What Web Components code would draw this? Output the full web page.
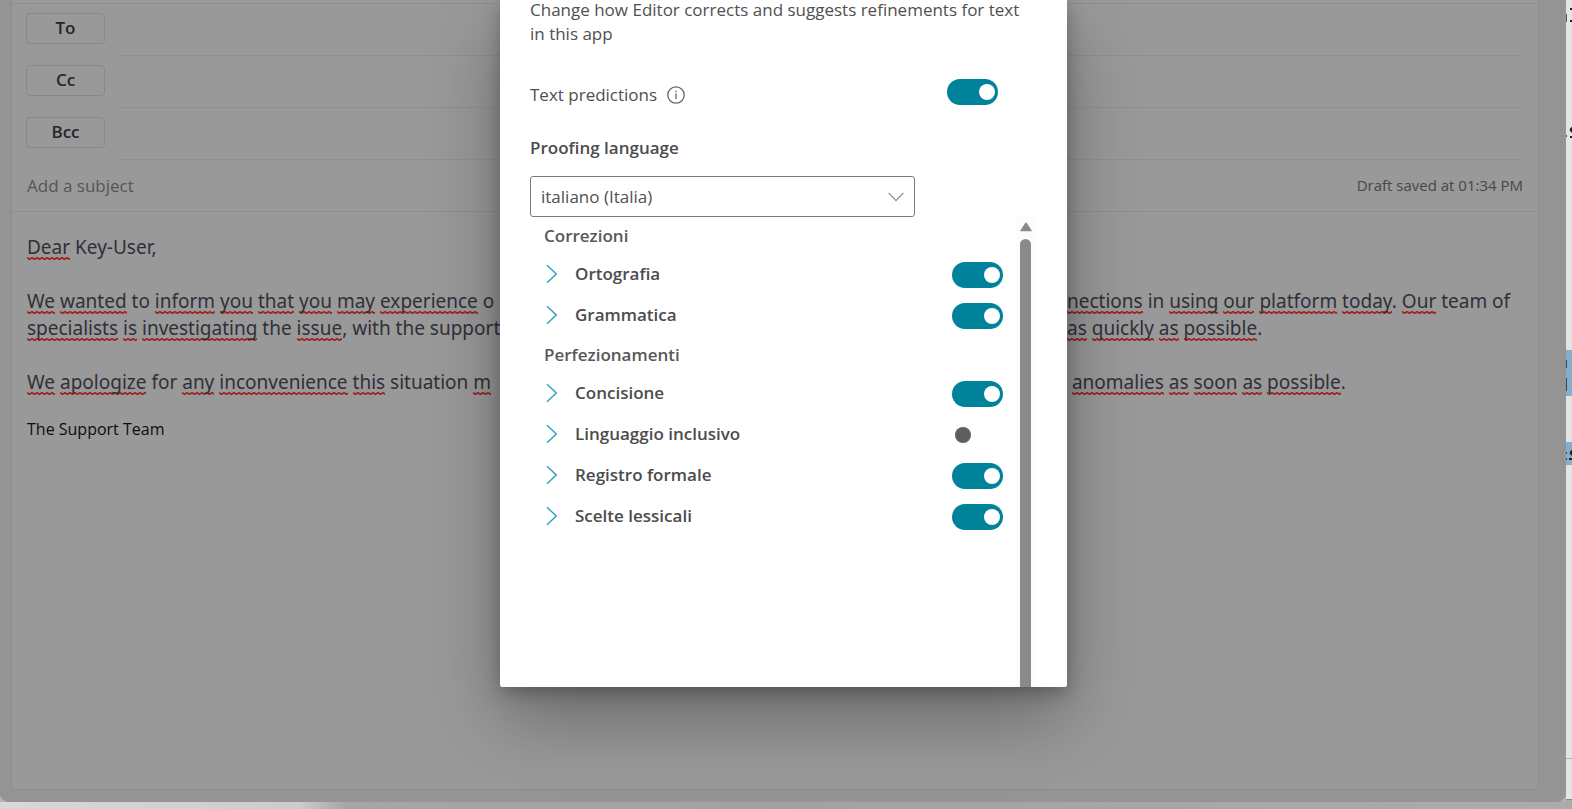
<!DOCTYPE html>
<html lang="en">
<head>
<meta charset="utf-8">
<meta name="viewport" content="width=device-width, initial-scale=1">
<title>Mail – Editor settings</title>
<style>
  body { margin: 0; font-family: "Open Sans", "Noto Sans", sans-serif; background: #e6e6e6; overflow: hidden; }
</style>
</head>
<body>
<mail-app></mail-app>
<script>
const define = (name, html, setup) => {
  const template = document.createElement('template');
  template.innerHTML = html;
  customElements.define(name, class extends HTMLElement {
    constructor() {
      super();
      this.attachShadow({ mode: 'open' }).append(template.content.cloneNode(true));
    }
    connectedCallback() { if (setup) setup(this, this.shadowRoot); }
  });
};

define('recipient-row', `
  <style>
    :host { display: flex; gap: 13px; height: 52px; padding: 0 15px 0 14px; }
    button { box-sizing: border-box; width: 79px; height: 31px; margin-top: 9px; padding: 0 0 2px;
      border: 1px solid #888; border-radius: 4px; background: none; color: #26262c;
      font: 600 17px/20px "Open Sans", sans-serif; }
    input { flex: 1; min-width: 0; border: 0; border-bottom: 1px solid #909090; padding: 0;
      background: none; outline: 0; font: inherit; }
  </style>
  <button type="button"><slot></slot></button>
  <input type="text">`,
  (el, root) => root.querySelector('input').setAttribute('aria-label', el.textContent.trim()));

define('subject-row', `
  <style>
    :host { display: flex; align-items: center; height: 51px; padding: 0 15px; border-bottom: 1px solid #8f8f8f; }
    input { flex: 1; min-width: 0; border: 0; padding: 0; background: none; outline: 0;
      font: 17px/24px "Open Sans", sans-serif; color: #222; }
    input::placeholder { color: #555; opacity: 1; }
    span { font: 15px/20px "Open Sans", sans-serif; color: #484848; padding-bottom: 2px; }
  </style>
  <input type="text" placeholder="Add a subject" aria-label="Add a subject">
  <span><slot></slot></span>`);

/* A word marked by the spelling checker. */
define('spell-mark', `<style>
    :host { display: inline; background: repeat-x left bottom / 5px 3px
      url("data:image/svg+xml,%3Csvg xmlns='http://www.w3.org/2000/svg' width='5' height='3'%3E%3Cpath d='M-1 .4L0 .6L2.5 2.4L5 .6L6 .4' fill='none' stroke='%23a02424' stroke-width='1.7'/%3E%3C/svg%3E"); }
  </style><slot></slot>`);

/* A line of the message: a start and an end on either side of the dialog. */
define('message-line', `
  <style>
    :host { display: grid; grid-template-columns: minmax(0, 1fr) 557px minmax(0, 1fr);
      height: 27px; font-family: "Noto Sans", sans-serif; font-size: 19px; line-height: 27px;
      white-space: nowrap; color: #303038; }
  </style>
  <slot></slot><span></span><slot name="end"></slot>`);

const marked = text => text.replace(/_([^_]+)_/g, '<spell-mark>$1</spell-mark>');
const line = (start, end = '') =>
  `<message-line><span>${marked(start)}</span><span slot="end">${marked(end)}</span></message-line>`;

define('message-body', `
  <style>
    :host { display: block; padding: 22px 0 0 15px; }
    .text { margin-right: -12px; }
    message-line { margin-bottom: 27px; }
    message-line.tight { margin-bottom: 0; }
    p { margin: 0; font-size: 16px; line-height: 24px; color: #0d0d0d; margin-top: -6px; }
  </style>
  <div class="text">
    ${line('_Dear_ Key-User,')}
    ${line('_We_ _wanted_ to _inform_ _you_ _that_ _you_ _may_ _experience_ o', '_nections_ in _using_ _our_ _platform_ _today_. _Our_ team of').replace('<message-line>', '<message-line class="tight">')}
    ${line('_specialists_ _is_ _investigating_ the _issue_, with the support', '_as_ _quickly_ _as_ _possible_.')}
    ${line('_We_ _apologize_ for _any_ _inconvenience_ _this_ situation _m_', '&nbsp;_anomalies_ _as_ _soon_ _as_ _possible_.')}
  </div>
  <p>The Support Team</p>`);

define('compose-window', `
  <style>
    :host { display: flex; box-sizing: border-box; padding: 0 27px 12px 11px; background: #949494;
      border-radius: 0 0 10px 10px; box-shadow: 0 0 1px #777; }
    section { flex: 1; min-width: 0; background: #999; border: solid #8f8f8f; border-width: 0 1px 1px;
      border-radius: 0 0 5px 5px; }
    hr { margin: 3px 0 0; border: 0; height: 1px; background: #8f8f8f; }
  </style>
  <section>
    <hr>
    <recipient-row>To</recipient-row>
    <recipient-row>Cc</recipient-row>
    <recipient-row>Bcc</recipient-row>
    <subject-row>Draft saved at 01:34 PM</subject-row>
    <message-body></message-body>
  </section>`);

/* The edge of the page that lies behind the compose window. */
define('page-edge', `
  <style>
    :host { display: flex; flex-direction: column; overflow: hidden; background: #e4e4e4; }
    svg { flex: none; display: block; }
    .e { flex: none; margin-top: 293px; height: 40px; border: solid #b4b4b4; border-width: 1px 0; border-bottom-color: #888; }
    .f { flex: 1; background: #aaa; }
  </style>
  <svg width="6" height="465" viewBox="0 0 6 465">
    <path fill="#84aed0" d="M0 350H6V396H0ZM0 442H6V465H0Z"/>
    <path fill="#2e6a94" d="M0 14H1V22H0ZM0 135H1V137H0Z"/>
    <path fill="#2b4a63" d="M0 360H1V368H0ZM0 378H1V391H0ZM0 452H1V454H0ZM0 458H1V460H0Z"/>
    <path fill="#26201c" d="M4 8H6V10H4ZM4 20H6V22H4ZM4 136H6V138H4ZM6 127Q3 128 4 131L6 133ZM6 450Q3 451 4 454L6 456ZM3 458H6V460H3Z"/>
  </svg>
  <div class="e"></div><div class="f"></div>`);

define('page-foot', `
  <style>
    :host { display: flex; background: linear-gradient(90deg, #d8d8d8 0, #cccccc 300px, #a6a6a6 345px, #a2a2a2 50%, #acacac); }
    span { flex: 1; }
    span:first-child { flex: 0 0 84%; border-right: 1px solid #8c8c8c; }
  </style><span></span><span></span>`);

define('toggle-switch', `
  <style>
    :host { display: block; width: 51px; height: 26px; }
    input { appearance: none; display: flex; align-items: center; box-sizing: border-box; margin: 0;
      width: 51px; height: 26px; padding: 0 3px; border-radius: 13px; }
    input::before { content: ""; width: 16px; height: 16px; border-radius: 50%; background: #605e5c; }
    input:checked { background: #00829b; justify-content: flex-end; }
    input:checked::before { background: #fff; }
  </style>
  <input type="checkbox" role="switch">`,
  (el, root) => {
    const input = root.querySelector('input');
    input.checked = el.hasAttribute('on');
    input.setAttribute('aria-label', el.getAttribute('label'));
  });

define('option-row', `
  <style>
    :host { display: flex; align-items: center; height: 41px; }
    button { display: flex; align-items: center; gap: 17px; flex: 1; padding: 0 0 2px 2px; border: 0;
      background: none; color: #4c4c4c; text-align: left; font: 600 17px/24px "Open Sans", sans-serif; }
    svg { display: block; }
  </style>
  <button type="button" aria-expanded="false">
    <svg width="12" height="20" viewBox="0 0 12 20" fill="none" stroke="#2b9fb8" stroke-width="1.4"><path d="M1 1.3L10.3 10L1 18.7"/></svg>
    <span></span>
  </button>
  <toggle-switch></toggle-switch>`,
  (el, root) => {
    const label = el.getAttribute('label');
    root.querySelector('span').textContent = label;
    const old = root.querySelector('toggle-switch');
    const toggle = document.createElement('toggle-switch');
    toggle.setAttribute('label', label);
    toggle.toggleAttribute('on', el.hasAttribute('on'));
    old.replaceWith(toggle);
  });

define('editor-dialog', `
  <style>
    :host { display: block; box-sizing: border-box; width: 567px; padding: 0 32px 0 30px; background: #fff;
      color: #505050; border-radius: 0 0 2px 2px; font-size: 17px; line-height: 24px;
      box-shadow: 0 32px 72px rgba(0,0,0,.3), 0 6px 18px rgba(0,0,0,.26); }
    .intro { margin: -2px 0 0; }
    .line { display: flex; align-items: center; height: 26px; padding: 33px 37px 0 0; }
    .line div { display: flex; align-items: center; gap: 10px; padding-top: 5px; }
    .line toggle-switch { margin-left: auto; }
    label { display: block; padding: 31px 0 16px; font-weight: 600; color: #4c4c4c; }
    .select { display: grid; width: 385px; align-items: center; }
    .select > * { grid-area: 1 / 1; }
    select { appearance: none; height: 41px; padding: 0 10px; border: 1px solid #7c7c7c; border-radius: 3px;
      background: #fff; color: #505050; font: 17px/24px "Open Sans", sans-serif; }
    .select svg { justify-self: end; margin-right: 11px; pointer-events: none; }
    .scroll { display: flex; min-height: 470px; }
    .list { flex: 1; padding: 0 13px 0 14px; }
    h3 { margin: 0; font-size: 17px; line-height: 38px; height: 37px; font-weight: 600; color: #585858; }
    .bar { display: flex; flex-direction: column; align-items: center; width: 19px; padding-top: 5px; background: #fcfcfc; }
    .bar i { width: 11px; flex: 1; margin-top: 7px; border-radius: 6px 6px 0 0; background: #8a8a8a; }
  </style>
  <p class="intro">Change how Editor corrects and suggests refinements for text<br>in this app</p>
  <div class="line">
    <div>
      <span>Text predictions</span>
      <svg width="18" height="18" viewBox="0 0 18 18" fill="none" stroke="#666" stroke-width="1.3"><circle cx="9" cy="9" r="8.2"/><path d="M9 7.6V13M9 4.8V6.2"/></svg>
    </div>
    <toggle-switch label="Text predictions" on></toggle-switch>
  </div>
  <label for="language">Proofing language</label>
  <div class="select">
    <select id="language"><option>italiano (Italia)</option></select>
    <svg width="16" height="10" viewBox="0 0 16 10" fill="none" stroke="#8a8a8a" stroke-width="1.2"><path d="M.7 .8L8 8.6L15.3 .8"/></svg>
  </div>
  <div class="scroll">
    <div class="list">
      <h3>Correzioni</h3>
      <option-row label="Ortografia" on></option-row>
      <option-row label="Grammatica" on></option-row>
      <h3>Perfezionamenti</h3>
      <option-row label="Concisione" on></option-row>
      <option-row label="Linguaggio inclusivo"></option-row>
      <option-row label="Registro formale" on></option-row>
      <option-row label="Scelte lessicali" on></option-row>
    </div>
    <div class="bar">
      <svg width="12" height="10" viewBox="0 0 12 10" fill="#8a8a8a"><path d="M6 .5Q6.6 .5 7 1.2L11.7 8.4Q11.8 9.3 11 9.3H1Q.2 9.3 .3 8.4L5 1.2Q5.4 .5 6 .5Z"/></svg>
      <i></i>
    </div>
  </div>`);

define('mail-app', `
  <style>
    :host { display: grid; position: relative; min-height: 100vh;
      grid-template: minmax(0, 1fr) 7px / minmax(0, 1fr) 6px; }
    page-foot { grid-row: 2; grid-column: 1; }
    page-edge { grid-row: 1 / 3; grid-column: 2; }
    .under { background: #b4b4b4; display: grid; }
    .over { position: absolute; top: 0; left: 0; right: 5px; display: flex; justify-content: center; }
  </style>
  <div class="under"><compose-window></compose-window></div>
  <page-edge aria-hidden="true"></page-edge>
  <page-foot></page-foot>
  <div class="over"><editor-dialog role="dialog" aria-label="Editor settings"></editor-dialog></div>`);
</script>
</body>
</html>
